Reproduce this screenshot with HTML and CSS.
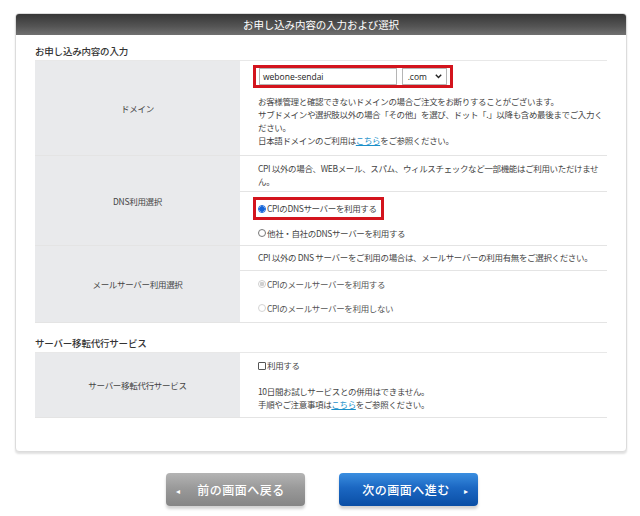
FILE: index.html
```html
<!DOCTYPE html>
<html lang="ja">
<head>
<meta charset="utf-8">
<link rel="stylesheet" href="styles.css">
</head>
<body>
<div class="card">
  <div class="card-head">お申し込み内容の入力および選択</div>
  <div class="card-body">
    <div class="sec-title">お申し込み内容の入力</div>
    <div class="table">
      <div class="row row-domain">
        <div class="label">ドメイン</div>
        <div class="value">
          <div class="domain-box">
            <span class="text-input">webone-sendai</span>
            <span class="select">.com<svg class="chev" width="7" height="5" viewBox="0 0 7 5"><path d="M0.8 0.8 L3.5 3.6 L6.2 0.8" fill="none" stroke="#222" stroke-width="1.4"/></svg></span>
          </div>
          <p class="desc">お客様管理と確認できないドメインの場合ご注文をお断りすることがございます。<br>サブドメインや選択肢以外の場合「その他」を選び、ドット「.」以降も含め最後までご入力ください。<br>日本語ドメインのご利用は<a class="link">こちら</a>をご参照ください。</p>
        </div>
      </div>
      <div class="row row-dns">
        <div class="label">DNS利用選択</div>
        <div class="value split">
          <p class="desc sub-desc">CPI 以外の場合、WEBメール、スパム、ウィルスチェックなど一部機能はご利用いただけません。</p>
          <div class="options">
            <div class="opt hl"><span class="radio on"></span>CPIのDNSサーバーを利用する</div>
            <div class="opt"><span class="radio"></span>他社・自社のDNSサーバーを利用する</div>
          </div>
        </div>
      </div>
      <div class="row row-mail">
        <div class="label">メールサーバー利用選択</div>
        <div class="value split">
          <p class="desc sub-desc one">CPI 以外の DNS サーバーをご利用の場合は、メールサーバーの利用有無をご選択ください。</p>
          <div class="options mail-opts">
            <div class="opt dis"><span class="radio dis-on"></span>CPIのメールサーバーを利用する</div>
            <div class="opt dis"><span class="radio dis-off"></span>CPIのメールサーバーを利用しない</div>
          </div>
        </div>
      </div>
    </div>
    <div class="sec-title sec2">サーバー移転代行サービス</div>
    <div class="table">
      <div class="row row-move">
        <div class="label">サーバー移転代行サービス</div>
        <div class="value">
          <div class="opt chk-line"><span class="check"></span>利用する</div>
          <p class="desc">10日間お試しサービスとの併用はできません。<br>手順やご注意事項は<a class="link">こちら</a>をご参照ください。</p>
        </div>
      </div>
    </div>
  </div>
</div>
<div class="buttons">
  <div class="btn back"><span class="arr">◂</span>前の画面へ戻る</div>
  <div class="btn next">次の画面へ進む<span class="arr">▸</span></div>
</div>
</body>
</html>
```

FILE: styles.css
```css
* { box-sizing: border-box; }
html, body { margin: 0; padding: 0; background: #fff; }
body {
  font-family: "Noto Sans CJK JP", "Noto Sans", sans-serif;
  color: #333;
  width: 640px;
  height: 516px;
  overflow: hidden;
}
.card {
  margin: 13px 13px 0 15px;
  width: 612px;
  border: 1px solid #dcdcdc;
  border-radius: 4px;
  box-shadow: 0 2px 2px rgba(0,0,0,0.12);
  background: #fff;
  overflow: hidden;
}
.card-head {
  height: 21px;
  line-height: 21px;
  text-align: center;
  color: #fff;
  font-size: 10.5px;
  background: linear-gradient(#363636, #555 60%, #707070);
  letter-spacing: -0.1px;
}
.card-body {
  padding: 9px 19px 33px 19px;
}
.sec-title {
  font-size: 9.5px;
  line-height: 14px;
  color: #333;
  margin-bottom: 2px;
  font-weight: 500;
  letter-spacing: -0.2px;
}
.sec2 { margin-top: 13px; }
.table {
  border-top: 1px solid #e8e8e8;
  border-bottom: 1px solid #e4e4e4;
}
.row {
  display: grid;
  grid-template-columns: 205px 1fr;
  border-bottom: 1px solid #e4e4e4;
}
.row:last-child { border-bottom: none; }
.label {
  background: #e9eaec;
  display: flex;
  align-items: center;
  justify-content: center;
  font-size: 8.5px;
  color: #444;
  letter-spacing: -0.3px;
}
.value {
  padding: 0 0 0 18px;
  font-size: 8.5px;
  line-height: 13px;
  color: #444;
  letter-spacing: -0.35px;
}
.desc { margin: 0; }
.row-domain { height: 95px; }
.row-domain .value { padding-top: 4px; }
.domain-box {
  display: inline-flex;
  align-items: center;
  gap: 5px;
  border: 3px solid #d3141d;
  padding: 1px 3px 1px 3px;
  margin-left: -5px;
  width: 200px;
  height: 23px;
  letter-spacing: 0;
}
.text-input {
  width: 140px;
  height: 17px;
  border: 1px solid #b5b5b5;
  padding-left: 3px;
  font-family: "Open Sans", "Liberation Sans", sans-serif;
  font-size: 8.5px;
  line-height: 15px;
  color: #222;
}
.select {
  width: 46px;
  height: 17px;
  border: 1px solid #b5b5b5;
  padding-left: 5px;
  font-family: "Open Sans", "Liberation Sans", sans-serif;
  font-size: 8.5px;
  line-height: 15px;
  color: #222;
  display: flex;
  align-items: center;
  justify-content: space-between;
  padding-right: 4px;
}
.chev { display: block; }
.row-domain .desc { margin-top: 7px; padding-right: 2px; }
.link { color: #1a8fc9; text-decoration: underline; }
.split { padding: 0; }
.split .desc, .split .options { padding-left: 18px; }
.sub-desc {
  border-bottom: 1px solid #e4e4e4;
  padding-top: 6px;
  padding-bottom: 3px;
  padding-right: 4px;
}
.sub-desc.one { padding-top: 5px; padding-bottom: 6px; }
.row-dns { height: 90px; }
.row-dns .options { padding-top: 5px; }
.opt {
  display: flex;
  align-items: center;
  font-size: 8.5px;
  line-height: 13px;
  color: #444;
  height: 24px;
  white-space: nowrap;
}
.opt.hl {
  border: 3px solid #d3141d;
  width: 131px;
  height: 23px;
  margin-left: -5px;
  padding-left: 2px;
  margin-bottom: 1px;
}
.radio {
  width: 8px;
  height: 8px;
  border-radius: 50%;
  border: 1px solid #777;
  margin-right: 1px;
  background: #fff;
  flex: none;
}
.radio.on {
  border: 1px solid #1464d8;
  background: radial-gradient(circle, #1464d8 0 2.5px, #fff 3px);
}
.dis { color: #555; }
.radio.dis-on {
  border-color: #cfcfcf;
  background: radial-gradient(circle, #cfcfcf 0 2px, #fff 2.5px);
}
.radio.dis-off { border-color: #d4d4d4; }
.row-mail { height: 76px; }
.mail-opts { padding-top: 1px; }
.row-move { height: 64px; }
.row-move .value { padding-top: 6px; }
.chk-line { height: 13px; margin-bottom: 13px; }
.check {
  width: 8px;
  height: 8px;
  border: 1px solid #555;
  border-radius: 1px;
  margin-right: 1px;
  flex: none;
}
.buttons {
  display: flex;
  justify-content: center;
  gap: 34px;
  margin-top: 21px;
  padding-left: 3px;
}
.btn {
  width: 139px;
  height: 33px;
  border-radius: 4px;
  color: #fff;
  font-size: 12px;
  letter-spacing: 0.5px;
  display: flex;
  align-items: center;
  justify-content: center;
  position: relative;
  box-shadow: 0 3px 3px rgba(0,0,0,0.18);
  font-weight: 500;
}
.btn .arr {
  position: absolute;
  top: 50%;
  transform: translateY(-50%);
  font-size: 8px;
}
.back {
  background: linear-gradient(#b4b4b4, #9a9a9a 45%, #858585);
  padding-left: 12px;
}
.back .arr { left: 10px; }
.next {
  background: linear-gradient(#3a8ee0, #1b67c2 45%, #0a4ea5);
  padding-right: 4px;
}
.next .arr { right: 9px; }
```
